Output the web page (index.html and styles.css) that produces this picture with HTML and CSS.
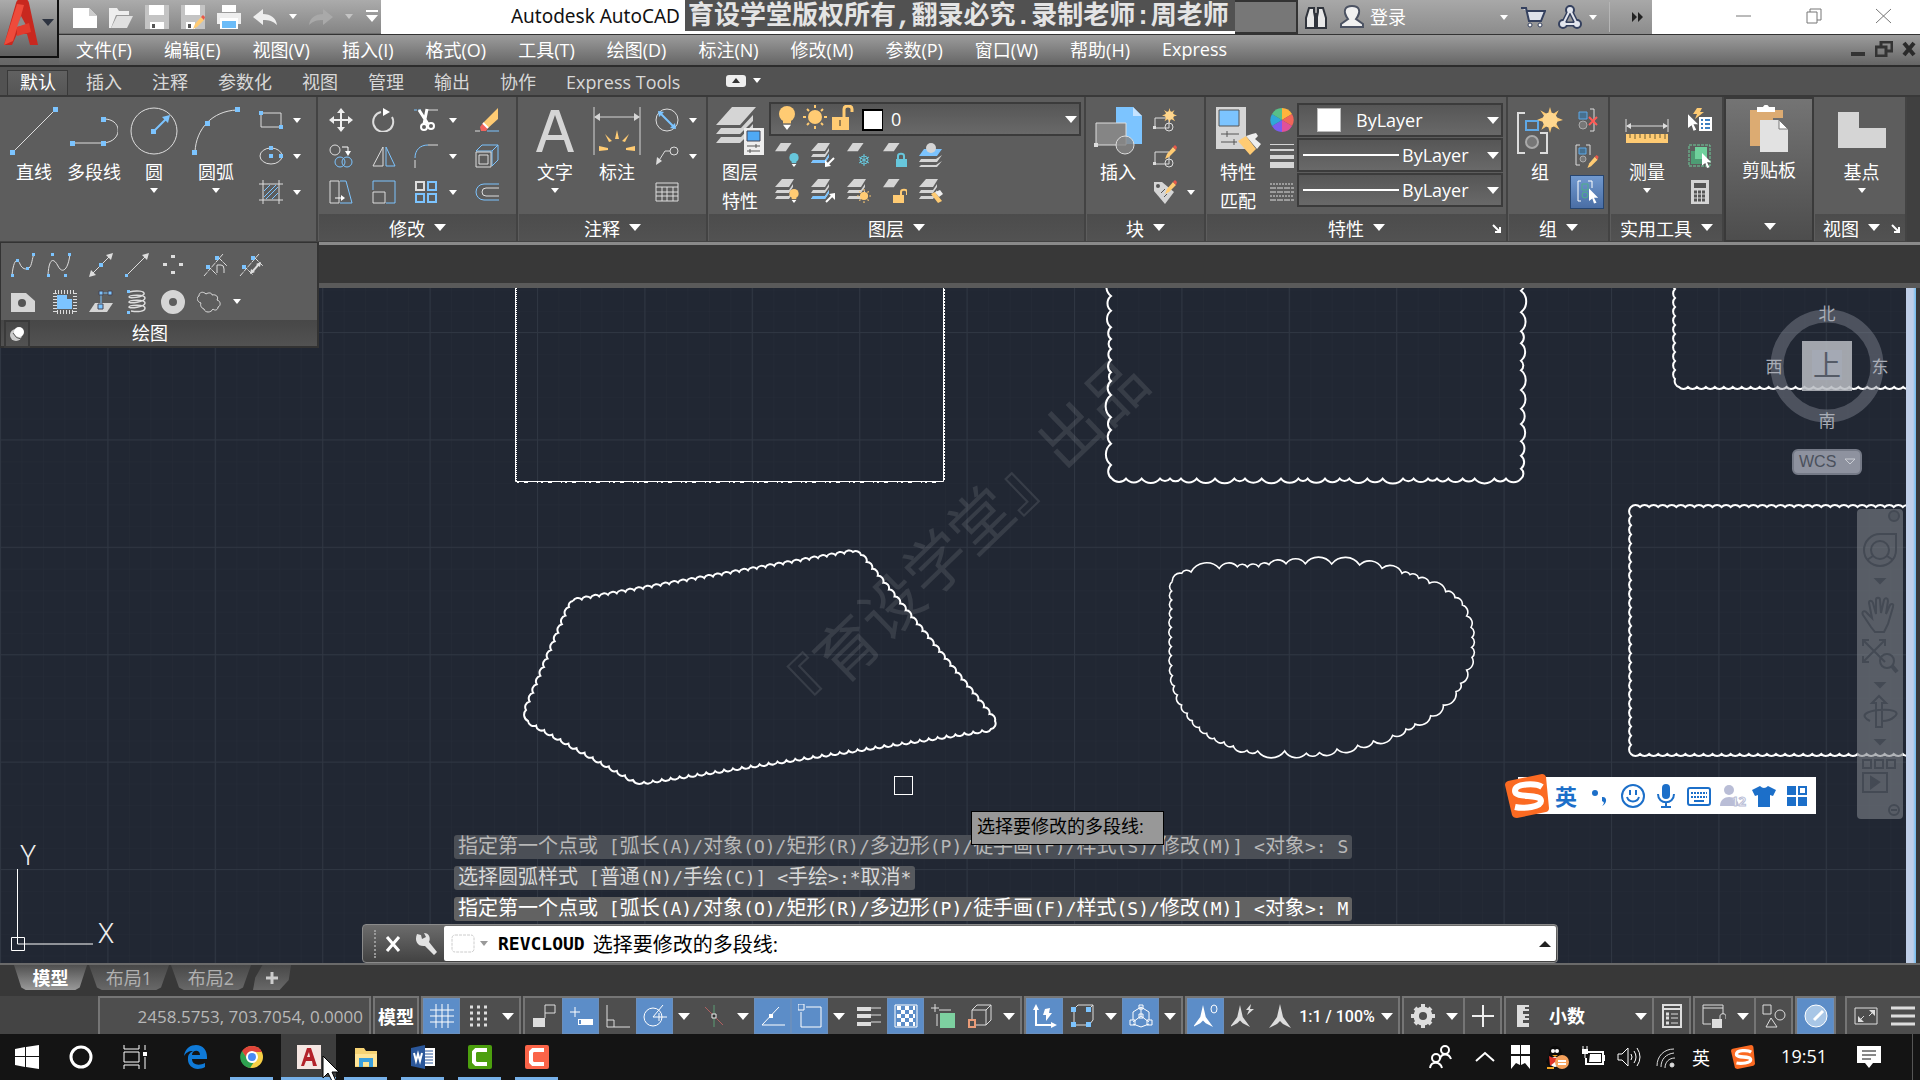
FILE: index.html
```html
<!DOCTYPE html>
<html lang="zh-CN">
<head>
    <meta charset="UTF-8">
    <title>Autodesk AutoCAD</title>
    <link rel="stylesheet" href="styles.css">
</head>
<body>

<!-- shapes used by more than one icon -->
<svg class="defs" width="0" height="0">
    <symbol id="sheet" viewBox="0 0 24 24"><path d="M7 1h13l-7 10H0z" fill="#d5d5d5"/></symbol>
    <symbol id="stack" viewBox="0 0 24 24">
        <path d="M7 0h12l-5 8H0z" fill="#d5d5d5"/>
        <path d="M2 11h12l4-6v3l-4 6H0z" fill="#d5d5d5"/>
        <path d="M2 17h12l4-6v3l-4 6H0z" fill="#d5d5d5"/>
    </symbol>
    <symbol id="bulb" viewBox="0 0 12 18"><circle cx="6" cy="6" r="6"/><path d="M3 11h6v2H3z"/><path d="M3 14h6l-3 4z" fill="#fff"/></symbol>
    <symbol id="sun" viewBox="0 0 24 24">
        <circle cx="12" cy="12" r="7" fill="#ffcb73"/>
        <path d="M12 0v3M12 21v3M0 12h3M21 12h3M4 4l2 2M18 18l2 2M4 20l2-2M18 6l2-2" stroke="#ffcb73" stroke-width="2"/>
    </symbol>
    <symbol id="burst" viewBox="0 0 24 24">
        <path d="M12 0l2 7 6-4-3 6 7 3-7 2 4 7-7-4-2 7-2-7-6 4 3-7-7-2 7-3-4-6 7 4z" fill="#ffcb73"/>
        <circle cx="12" cy="12" r="7" fill="#ffd78f"/>
    </symbol>
    <symbol id="pencil" viewBox="0 0 12 14"><path d="M0 14l2-5 6-7 3 3-7 7z" fill="#ffcb73"/><path d="M8 2l2-2 2 2-1 3z" fill="#e8594a"/></symbol>
    <symbol id="pointer" viewBox="0 0 12 18"><path d="M0 0v15l4-3 2 6 3-1-3-6h5z" fill="#fff"/></symbol>
    <symbol id="compass" viewBox="0 0 24 24"><path d="M12 0l3 13 8 11-8-4-3-3-3 3-8 4L9 13z"/></symbol>
    <symbol id="sogou" viewBox="0 0 44 44">
        <path d="M3 7l34-7q3 0 4 3l3 31q0 3-3 4L12 44q-4 0-5-3L0 11q0-3 3-4z" fill="#fb6a22"/>
        <path d="M37 13c-6-4-27-4-27 4 0 8 26 2 26 10 0 6-17 8-26 6" fill="none" stroke="#fff" stroke-width="6"/>
    </symbol>
</svg>

<header class="top">
    <button class="app-button" aria-label="应用程序菜单">
        <svg width="38" height="48" viewBox="0 0 38 48">
            <path d="M1 47L13 5q1-4 5-4h4q3 0 4 4l9 42h-8l-3-11H14l-5 11z" fill="#c8281f"/>
            <path d="M14 6L1 47l9-4 8-25 3-11z" fill="#ee4b3b"/>
            <path d="M18 18l-4 11 9-2z" fill="#8d8d8d"/>
            <path d="M14 29l12-4 2 9-14 4z" fill="#e33b2d"/>
        </svg>
        <span class="caret dark"></span>
    </button>

    <div class="top-rows">
        <div class="title-row">
            <div class="quick">
                <button aria-label="新建"><svg width="24" height="24"><path d="M0 3h16l8 8v12H0z" fill="#fff"/><path d="M16 3v8h8z" fill="#ccc"/></svg></button>
                <button aria-label="打开"><svg width="24" height="24"><path d="M0 3h8l2 3h10v4H7L2 23H0z" fill="#eee"/><path d="M8 11h16l-6 12H2z" fill="#e0e0e0"/></svg></button>
                <button aria-label="保存"><svg width="24" height="24"><path d="M0 0h24v24H0z" fill="#c4c4c4"/><path d="M4 0h15v10H4z" fill="#fff"/><path d="M5 17h14v7H5z" fill="#fff"/><path d="M7 19h3v4H7z" fill="#555"/></svg></button>
                <button aria-label="另存为"><svg width="24" height="24"><path d="M0 0h24v24H0z" fill="#c4c4c4"/><path d="M4 0h15v10H4z" fill="#fff"/><path d="M5 17h9v7H5z" fill="#fff"/><path d="M7 19h3v4H7z" fill="#555"/><use href="#pencil" x="12" y="10" width="12" height="14"/></svg></button>
                <button aria-label="打印"><svg width="24" height="24"><path d="M5 0h14v7H5z" fill="#fff"/><path d="M0 8h24v11H0z" fill="#eee"/><path d="M3 13h18v11H3z" fill="#fff"/><path d="M5 16h14v7H5z" fill="#6cbcf8"/></svg></button>
                <button aria-label="放弃"><svg width="24" height="24"><path d="M0 12L10 4v5c8 0 13 4 14 11-4-4-8-5-14-5v5z" fill="#eee"/></svg></button>
                <span class="caret small"></span>
                <button aria-label="重做"><svg width="24" height="24"><path d="M24 12L14 4v5C6 9 1 13 0 20c4-4 8-5 14-5v5z" fill="#a9a9a9"/></svg></button>
                <span class="caret small dim"></span>
                <button aria-label="自定义"><svg width="14" height="24"><path d="M1 5h12v2H1zM1 10h12l-6 7z" fill="#fff"/></svg></button>
            </div>
            <div class="title">Autodesk AutoCAD</div>
            <div class="notice">育设学堂版权所有,翻录必究.录制老师:周老师</div>
            <div class="search-rest"></div>
            <div class="info">
                <button aria-label="搜索"><svg width="24" height="24"><path d="M5 3h5v4l1 5v11H2V13zM14 3h5l3 10v10h-9V12l1-5z" fill="#e8e8e8" stroke="#30343c" stroke-width="2"/><path d="M10 8h4v5h-4z" fill="#30343c"/></svg></button>
                <button class="login"><svg width="24" height="24"><path d="M8 14c-6-8-3-13 4-13s10 5 4 13l7 5v3H1v-3z" fill="#f1f1f1" stroke="#4c5363" stroke-width="2"/></svg>登录</button>
                <span class="caret small"></span>
                <button aria-label="购物车"><svg width="26" height="24"><path d="M1 3h5l3 13h12l4-10H7" fill="#dde1ea" stroke="#34405e" stroke-width="2"/><circle cx="10" cy="20" r="2" fill="#fff" stroke="#34405e"/><circle cx="20" cy="20" r="2" fill="#fff" stroke="#34405e"/></svg></button>
                <button class="share"><svg width="24" height="24"><path d="M12 5L5 19h14z" fill="none" stroke="#34405e" stroke-width="5"/><g fill="#e3e6ee" stroke="#34405e" stroke-width="2"><circle cx="12" cy="5" r="4"/><circle cx="5" cy="19" r="4"/><circle cx="19" cy="19" r="4"/></g><path d="M12 5L5 19h14z" fill="none" stroke="#e3e6ee" stroke-width="2"/></svg><span class="caret small"></span></button>
                <span class="rule"></span>
                <button aria-label="更多"><svg width="12" height="12"><path d="M0 1l5 5-5 5zM6 1l5 5-5 5z" fill="#222"/></svg></button>
            </div>
            <div class="window-buttons">
                <button aria-label="最小化"><svg width="16" height="16"><path d="M0 8h15" stroke="#777"/></svg></button>
                <button aria-label="还原"><svg width="16" height="16"><path d="M1 4h10v11H1zM4 4V1h11v11h-4" fill="none" stroke="#777"/></svg></button>
                <button aria-label="关闭"><svg width="16" height="16"><path d="M0 1l15 14M15 1L0 15" stroke="#777"/></svg></button>
            </div>
        </div>
        <nav class="menu">
            <button>文件(F)</button>
            <button>编辑(E)</button>
            <button>视图(V)</button>
            <button>插入(I)</button>
            <button>格式(O)</button>
            <button>工具(T)</button>
            <button>绘图(D)</button>
            <button>标注(N)</button>
            <button>修改(M)</button>
            <button>参数(P)</button>
            <button>窗口(W)</button>
            <button>帮助(H)</button>
            <button>Express</button>
            <div class="doc-buttons">
                <button aria-label="最小化图形"><svg width="16" height="16"><path d="M1 11h14v4H1z" fill="#333"/></svg></button>
                <button aria-label="还原图形"><svg width="18" height="16"><path d="M1 6h10v9H1zM6 5V1h11v9h-5" fill="none" stroke="#333" stroke-width="3"/></svg></button>
                <button aria-label="关闭图形"><svg width="14" height="16"><path d="M2 2l10 12M12 2L2 14" stroke="#2a2a2a" stroke-width="4"/></svg></button>
            </div>
        </nav>
    </div>
</header>

<nav class="tabs">
    <button class="active">默认</button>
    <button>插入</button>
    <button>注释</button>
    <button>参数化</button>
    <button>视图</button>
    <button>管理</button>
    <button>输出</button>
    <button>协作</button>
    <button>Express Tools</button>
    <button class="fold" aria-label="最小化功能区"><svg width="20" height="12"><rect width="20" height="12" rx="3" fill="#eee"/><path d="M10 3l4 5H6z" fill="#333"/></svg><span class="caret small"></span></button>
</nav>

<section class="ribbon">
    <div class="panel draw">
        <div class="body">
            <button class="big"><svg width="48" height="48"><path d="M3 45L45 3" stroke="#ddd"/><path d="M0 43h5v5H0zM43 0h5v5h-5z" fill="#7cc4ff"/></svg>直线</button>
            <button class="big"><svg width="48" height="48"><path d="M3 36h30c20-1 20-24 1-24" fill="none" stroke="#ddd"/><path d="M0 34h5v5H0zM31 34h5v5h-5zM31 10h5v5h-5z" fill="#7cc4ff"/></svg>多段线</button>
            <button class="big"><svg width="48" height="48"><circle cx="24" cy="24" r="23" fill="none" stroke="#ddd"/><path d="M24 24L36 12" stroke="#7cc4ff" stroke-width="2"/><path d="M40 8l-2 8-6-6zM21 22h5v5h-5z" fill="#7cc4ff"/></svg>圆<span class="caret small"></span></button>
            <button class="big wide"><svg width="48" height="48"><path d="M3 45C4 22 20 4 45 3" fill="none" stroke="#ddd"/><path d="M0 43h5v5H0zM13 14h5v5h-5zM43 0h5v5h-5z" fill="#7cc4ff"/></svg>圆弧<span class="caret small"></span></button>
            <div class="tools two">
                <button aria-label="矩形"><svg width="24" height="24"><path d="M2 5h20v14H2z" fill="none" stroke="#ddd"/><path d="M0 3h4v4H0zM20 17h4v4h-4z" fill="#7cc4ff"/></svg></button>
                <span class="caret small"></span>
                <button aria-label="椭圆"><svg width="24" height="24"><ellipse cx="12" cy="12" rx="11" ry="8" fill="none" stroke="#ddd"/><path d="M10 2h4v4h-4zM10 10h4v4h-4zM20 10h4v4h-4z" fill="#7cc4ff"/></svg></button>
                <span class="caret small"></span>
                <button aria-label="图案填充"><svg width="24" height="24"><path d="M4 0v24M20 0v24M0 4h24M0 20h24" stroke="#ddd"/><path d="M5 11l6-6M5 17L17 5M7 19L19 7M13 19l6-6" stroke="#7cc4ff"/></svg></button>
                <span class="caret small"></span>
            </div>
        </div>
    </div>

    <div class="panel modify">
        <div class="body">
            <div class="tools five">
                <button aria-label="移动"><svg width="24" height="24"><path d="M12 0l4 5h-3v6h6V8l5 4-5 4v-3h-6v6h3l-4 5-4-5h3v-6H5v3l-5-4 5-4v3h6V5H8z" fill="#eee"/></svg></button>
                <button aria-label="旋转"><svg width="24" height="24"><path d="M9 4a10 10 0 1 0 11 5" fill="none" stroke="#ddd" stroke-width="2"/><path d="M11 0l7 4-7 4z" fill="#fff"/></svg></button>
                <button aria-label="修剪"><svg width="24" height="24"><path d="M0 2h8" stroke="#7cc4ff" stroke-dasharray="3 1"/><path d="M14 2h10" stroke="#ddd"/><path d="M5 2l9 14M13 1l-3 15" stroke="#fff" stroke-width="3"/><circle cx="10" cy="19" r="3" fill="none" stroke="#fff" stroke-width="2"/><circle cx="17" cy="18" r="3" fill="none" stroke="#fff" stroke-width="2"/></svg></button>
                <span class="caret small"></span>
                <button aria-label="删除"><svg width="24" height="24"><path d="M8 15L23 0v11L13 20z" fill="#ffcb73"/><path d="M8 15l5 5-2 3H6l-1-4z" fill="#f2625c"/><path d="M8 15l5 5" stroke="#fff" stroke-width="2"/><path d="M0 23h5" stroke="#ddd"/><path d="M12 23h12" stroke="#7cc4ff"/></svg></button>

                <button aria-label="复制"><svg width="24" height="24"><circle cx="6" cy="6" r="5" fill="none" stroke="#ddd"/><path d="M13 3h6v6" fill="none" stroke="#fff"/><path d="M16 7h6l-3 5z" fill="#fff"/><circle cx="11" cy="18" r="5" fill="none" stroke="#7cc4ff"/><circle cx="18" cy="18" r="5" fill="none" stroke="#7cc4ff"/></svg></button>
                <button aria-label="镜像"><svg width="24" height="24"><path d="M11 3v19H1z" fill="none" stroke="#ddd"/><path d="M14 3v19h9z" fill="none" stroke="#7cc4ff"/></svg></button>
                <button aria-label="圆角"><svg width="24" height="24"><path d="M1 24v-8M14 1h10" stroke="#ddd"/><path d="M1 14C1 6 6 1 14 1" fill="none" stroke="#7cc4ff"/></svg></button>
                <span class="caret small"></span>
                <button aria-label="分解"><svg width="24" height="24"><path d="M1 7l6-6h16v15l-6 6M1 7h16l6-6M17 7v15" fill="none" stroke="#7cc4ff"/><path d="M1 8h15v15H1zM4 11h9v9H4z" fill="none" stroke="#ddd"/></svg></button>

                <button aria-label="拉伸"><svg width="24" height="24"><path d="M1 1h9v22H1z" fill="none" stroke="#ddd"/><path d="M11 1h6l6 22H11" fill="none" stroke="#7cc4ff"/><path d="M6 18h7" stroke="#fff"/><path d="M12 15l4 3-4 3z" fill="#fff"/></svg></button>
                <button aria-label="缩放"><svg width="24" height="24"><path d="M1 10V1h22v22H14" fill="none" stroke="#7cc4ff"/><path d="M1 12h12v11H1z" fill="none" stroke="#ddd"/></svg></button>
                <button aria-label="阵列"><svg width="24" height="24"><path d="M2 2h8v8H2z" fill="none" stroke="#ddd" stroke-width="2"/><path d="M14 2h8v8h-8zM2 14h8v8H2zM14 14h8v8h-8z" fill="none" stroke="#7cc4ff" stroke-width="2"/></svg></button>
                <span class="caret small"></span>
                <button aria-label="偏移"><svg width="24" height="24"><path d="M24 4H9a8 8 0 0 0 0 16h15" fill="none" stroke="#7cc4ff"/><path d="M24 8H11a4 4 0 0 0 0 8h13" fill="none" stroke="#ddd"/></svg></button>
            </div>
        </div>
        <button class="name">修改<span class="caret"></span></button>
    </div>

    <div class="panel annotate">
        <div class="body">
            <button class="big"><svg width="48" height="48"><path d="M5 45L20 3h8l15 42h-6l-4-12H15l-4 12zM17 28h14L24 8z" fill="#d5d5d5"/></svg>文字<span class="caret small"></span></button>
            <button class="big wide"><svg width="48" height="48"><path d="M1 0v48M47 0v48M2 10h44" stroke="#d5d5d5"/><path d="M1 10l6-4v8zM47 10l-6-4v8z" fill="#d5d5d5"/><path d="M24 23l2 9h-4zM12 27l7 7-3 1zM36 27l-7 7 3 1zM6 39l9 2v2l-9 1zM42 39l-9 2v2l9 1z" fill="#ffcb73"/></svg>标注</button>
            <div class="tools two">
                <button aria-label="直径"><svg width="24" height="24"><circle cx="12" cy="12" r="11" fill="none" stroke="#ddd"/><path d="M5 5l14 14" stroke="#7cc4ff" stroke-width="2"/><path d="M3 3l6 1-5 5zM21 21l-6-1 5-5z" fill="#7cc4ff"/></svg></button>
                <span class="caret small"></span>
                <button aria-label="引线"><svg width="24" height="24"><circle cx="19" cy="7" r="4" fill="none" stroke="#ddd"/><path d="M15 7h-5L3 18" fill="none" stroke="#ddd"/><path d="M1 21l1-8 5 4z" fill="#ddd"/></svg></button>
                <span class="caret small"></span>
                <button aria-label="表格"><svg width="24" height="24"><path d="M1 3h22v18H1zM1 7h22M1 12h22M1 16h22M7 7v14M12 7v14M18 7v14" fill="none" stroke="#ddd"/></svg></button>
            </div>
        </div>
        <button class="name">注释<span class="caret"></span></button>
    </div>

    <div class="panel layers">
        <div class="body">
            <button class="big"><svg width="48" height="48"><path d="M16 0h24L24 18H0zM0 27l5-6h20l12-13v6L24 27zM0 36l5-6h20l12-13v6L24 36z" fill="#d5d5d5"/><path d="M28 21h20v27H28z" fill="#eee"/><path d="M31 24h13v10H31z" fill="#4fa9f5" stroke="#445"/><path d="M31 39h13M31 44h13M40 37v4M34 42v4" stroke="#555"/></svg>图层<br>特性</button>
            <div class="layer-side">
                <div class="combo">
                    <svg width="104" height="28">
                        <use href="#bulb" x="0" y="0" width="16" height="26" fill="#ffcb73"/>
                        <use href="#sun" x="24" y="0" width="24" height="24"/>
                        <path d="M53 12h17v13H53z" fill="#ffcb73"/><path d="M65 12V4c0-4 8-4 8 0v3" fill="none" stroke="#ffcb73" stroke-width="3"/><path d="M61 15v6" stroke="#333"/>
                        <path d="M84 5h20v20H84z" fill="#fff" stroke="#000" stroke-width="2"/>
                    </svg>
                    <select aria-label="图层"><option>0</option></select>
                    <span class="caret"></span>
                </div>
                <div class="tools layer-grid">
                    <button aria-label="关"><svg width="24" height="24"><use href="#sheet" width="20" height="20" y="-1"/><use href="#bulb" x="14" y="10" width="10" height="14" fill="#67c7dc"/></svg></button>
                    <button aria-label="置为当前"><svg width="24" height="24"><use href="#stack" width="24" height="24"/><path d="M2 17h12l4-6v3l-4 6H0z" fill="#7cc4ff"/><path d="M23 15l-6 6" stroke="#fff" stroke-width="2"/><path d="M14 24v-7l6 6z" fill="#fff"/></svg></button>
                    <button aria-label="冻结"><svg width="24" height="24"><use href="#sheet" width="20" height="20" y="-1"/><path d="M17 11v12M12 14l10 6M12 20l10-6" stroke="#67c7dc"/><circle cx="17" cy="17" r="4" fill="none" stroke="#67c7dc"/></svg></button>
                    <button aria-label="锁定"><svg width="24" height="24"><use href="#sheet" width="20" height="20" y="-1"/><path d="M13 16h11v8H13z" fill="#67c7dc"/><path d="M15 16v-3c0-3 6-3 6 0v3" fill="none" stroke="#67c7dc" stroke-width="2"/></svg></button>
                    <button aria-label="匹配"><svg width="24" height="24"><path d="M5 6h18l-5 7H0z" fill="#7cc4ff"/><path d="M2 16h15l6-4-5 7H0zM2 22h15l6-4-5 6H0z" fill="#d5d5d5"/><circle cx="12" cy="5" r="5" fill="#d5d5d5"/></svg></button>
                    <button aria-label="全部打开"><svg width="24" height="24"><use href="#stack" width="24" height="24"/><use href="#bulb" x="14" y="10" width="10" height="14" fill="#ffcb73"/></svg></button>
                    <button aria-label="上一个"><svg width="24" height="24"><use href="#stack" width="24" height="24"/><path d="M2 17h12l4-6v3l-4 6H0z" fill="#7cc4ff"/><path d="M15 23l6-6" stroke="#fff" stroke-width="2"/><path d="M24 14v7l-6-6z" fill="#fff"/></svg></button>
                    <button aria-label="解冻"><svg width="24" height="24"><use href="#stack" width="24" height="24"/><use href="#sun" x="10" y="10" width="14" height="14"/></svg></button>
                    <button aria-label="解锁"><svg width="24" height="24"><use href="#sheet" width="20" height="20" y="-1"/><path d="M10 16h11v8H10z" fill="#ffcb73"/><path d="M18 16v-3c0-3 6-3 6 0v3" fill="none" stroke="#ffcb73" stroke-width="2"/></svg></button>
                    <button aria-label="更改"><svg width="24" height="24"><use href="#stack" width="24" height="24"/><path d="M12 15l4-2 7 9-4 2z" fill="#ffcb73"/><path d="M16 13l5-2 3 4-4 3z" fill="#eee"/></svg></button>
                </div>
            </div>
        </div>
        <button class="name">图层<span class="caret"></span></button>
    </div>

    <div class="panel block">
        <div class="body">
            <button class="big"><svg width="48" height="48"><path d="M22 0h17l9 9v28H22z" fill="#7cc4ff"/><path d="M39 0v9h9z" fill="#c5e3ff"/><path d="M2 16h30v22H2z" fill="#858585" stroke="#ddd"/><circle cx="31" cy="38" r="9" fill="#858585" fill-opacity=".8" stroke="#ddd"/><path d="M0 36h4v4H0z" fill="#ddd"/></svg>插入</button>
            <div class="tools two">
                <button aria-label="创建"><svg width="24" height="24"><path d="M2 10h14v10H2z" fill="none" stroke="#ddd"/><circle cx="16" cy="19" r="4" fill="none" stroke="#ddd"/><use href="#burst" x="9" y="0" width="15" height="15"/><path d="M0 18h3v3H0z" fill="#ddd"/></svg></button>
                <span></span>
                <button aria-label="编辑"><svg width="24" height="24"><path d="M2 8h14v12H2z" fill="none" stroke="#ddd"/><circle cx="16" cy="19" r="4" fill="none" stroke="#ddd"/><use href="#pencil" x="12" y="1" width="12" height="14"/><path d="M0 18h3v3H0z" fill="#ddd"/></svg></button>
                <span></span>
                <button aria-label="编辑属性"><svg width="24" height="24"><path d="M1 2h8l12 10-9 12L1 11z" fill="#d5d5d5"/><circle cx="5" cy="6" r="2" fill="#555"/><use href="#pencil" x="12" y="0" width="12" height="14"/><path d="M8 13l4-4M11 17l3-3" stroke="#555"/></svg></button>
                <span class="caret small"></span>
            </div>
        </div>
        <button class="name">块<span class="caret"></span></button>
    </div>

    <div class="panel props">
        <div class="body">
            <button class="big"><svg width="48" height="48"><path d="M2 0h30v42H2z" fill="#d5d5d5"/><path d="M5 3h20v16H5z" fill="#7cc4ff" stroke="#555"/><path d="M7 27h18M7 35h16M13 24v6M20 32v6" stroke="#555"/><path d="M24 34l8-5 10 13-6 6z" fill="#ffcb73"/><path d="M32 29l6-2 4-1 2 3-3 3 6 5-4 5z" fill="#eee"/></svg>特性<br>匹配</button>
            <div class="tools prop-icons">
                <button aria-label="颜色"><svg width="24" height="24"><path d="M12 12V0a12 12 0 0 1 10 6z" fill="#ffb43c"/><path d="M12 12l10-6a12 12 0 0 1 0 12z" fill="#f2665a"/><path d="M12 12l10 6a12 12 0 0 1-10 6z" fill="#e0509a"/><path d="M12 12v12a12 12 0 0 1-10-6z" fill="#7a5cf0"/><path d="M12 12L2 18A12 12 0 0 1 2 6z" fill="#2fa8d8"/><path d="M12 12L2 6a12 12 0 0 1 10-6z" fill="#58c088"/></svg></button>
                <button aria-label="线宽"><svg width="24" height="24"><path d="M0 0h24v1H0zM0 5h24v2H0zM0 11h24v4H0zM0 18h24v6H0z" fill="#d5d5d5"/></svg></button>
                <button aria-label="线型"><svg width="24" height="24"><path d="M0 4h24M0 16h24" stroke="#ddd" stroke-dasharray="2 1"/><path d="M0 8h24M0 12h24M0 20h24" stroke="#ddd" stroke-dasharray="6 1"/></svg></button>
            </div>
            <div class="prop-combos">
                <div class="combo color"><span class="swatch"></span><select aria-label="对象颜色"><option>ByLayer</option></select><span class="caret"></span></div>
                <div class="combo"><span class="line"></span><select aria-label="线宽"><option>ByLayer</option></select><span class="caret"></span></div>
                <div class="combo"><span class="line"></span><select aria-label="线型"><option>ByLayer</option></select><span class="caret"></span></div>
            </div>
        </div>
        <button class="name">特性<span class="caret"></span><svg class="launch" width="10" height="10"><path d="M1 1l7 7M8 3v5H3" fill="none" stroke="#fff" stroke-width="2"/></svg></button>
    </div>

    <div class="panel group">
        <div class="body">
            <button class="big"><svg width="48" height="48"><path d="M9 6H2v40h7M24 26h7v20h-7" fill="none" stroke="#ddd" stroke-width="2"/><path d="M10 14h12v9H10z" fill="none" stroke="#5fa8e6" stroke-width="2"/><circle cx="16" cy="35" r="6" fill="#777" stroke="#aaa" stroke-width="2"/><use href="#burst" x="21" y="0" width="26" height="26"/></svg>组</button>
            <div class="tools one">
                <button aria-label="解除编组"><svg width="24" height="24"><path d="M4 4h8v7H4z" fill="#47708f" stroke="#5fa8e6"/><circle cx="8" cy="17" r="4" fill="#777" stroke="#aaa"/><path d="M15 1h4v22h-4" fill="none" stroke="#ddd"/><path d="M14 9l8 8M22 9l-8 8" stroke="#ff5a55" stroke-width="2"/></svg></button>
                <button aria-label="组编辑"><svg width="24" height="24"><path d="M5 1H1v20h4M11 1h4v10" fill="none" stroke="#ddd"/><path d="M4 4h7v6H4z" fill="#47708f" stroke="#5fa8e6"/><circle cx="8" cy="15" r="3" fill="#777" stroke="#aaa"/><use href="#pencil" x="12" y="11" width="12" height="13"/></svg></button>
                <button class="pressed" aria-label="组选择"><svg width="24" height="24"><path d="M6 1H3v20h3M13 1h4v7" fill="none" stroke="#fff"/><path d="M7 4h6v6H7z" fill="none" stroke="#4faf88"/><circle cx="10" cy="15" r="3" fill="none" stroke="#4faf88"/><use href="#pointer" x="14" y="8" width="10" height="16"/></svg></button>
            </div>
        </div>
        <button class="name">组<span class="caret"></span></button>
    </div>

    <div class="panel utils">
        <div class="body">
            <button class="big"><svg width="48" height="48"><path d="M3 12v13M45 12v13M4 19h40" stroke="#ddd"/><path d="M3 19l5-3v6zM45 19l-5-3v6z" fill="#ddd"/><path d="M3 27h42v9H3z" fill="#ffcb73"/><path d="M7 27v4M12 27v5M17 27v4M22 27v5M27 27v4M32 27v5M37 27v4M42 27v5" stroke="#6b5a30"/></svg>测量<span class="caret small"></span></button>
            <div class="tools one">
                <button aria-label="快速选择"><svg width="24" height="24"><path d="M11 9h13v14H11z" fill="#fff"/><path d="M13 12h2M13 16h2M13 20h2M17 12h5M17 16h5M17 20h5" stroke="#3c7fc0" stroke-width="2"/><path d="M9 0h5l-2 4h4L7 11l2-5H5z" fill="#ffcb73"/><use href="#pointer" x="0" y="6" width="11" height="17"/></svg></button>
                <button aria-label="全部选择"><svg width="24" height="24"><path d="M1 1h21v21H1z" fill="none" stroke="#6fd09c" stroke-dasharray="3 1"/><path d="M3 7h13v13H3z" fill="#4d9c74"/><path d="M7 3h12v12H7z" fill="#6fd09c"/><use href="#pointer" x="14" y="9" width="10" height="15"/></svg></button>
                <button aria-label="计算器"><svg width="24" height="24"><path d="M3 0h18v24H3z" fill="#d5d5d5"/><path d="M6 3h12v5H6z" fill="#555"/><path d="M6 12h12M6 16h12M6 20h12" stroke="#555" stroke-width="3" stroke-dasharray="3 1"/></svg></button>
            </div>
        </div>
        <button class="name">实用工具<span class="caret"></span></button>
    </div>

    <div class="panel clip">
        <div class="body">
            <button class="big"><svg width="48" height="48"><path d="M5 5h33v8H28v28H5z" fill="#dcab72"/><path d="M12 2h6q3-5 6 0h6v5H12z" fill="#fff"/><path d="M15 15h19l9 9v23H15z" fill="#e2e2e2"/><path d="M34 15v9h9z" fill="#fff" stroke="#777"/></svg>剪贴板</button>
        </div>
        <button class="name" aria-label="剪贴板"><span class="caret"></span></button>
    </div>

    <div class="panel view">
        <div class="body">
            <button class="big"><svg width="48" height="48"><path d="M0 5h21v16h27v20H0z" fill="#d5d5d5"/></svg>基点<span class="caret small"></span></button>
        </div>
        <button class="name">视图<span class="caret"></span><svg class="launch" width="10" height="10"><path d="M1 1l7 7M8 3v5H3" fill="none" stroke="#fff" stroke-width="2"/></svg></button>
    </div>
</section>

<!-- slid-out part of the draw panel, floats over the drawing -->
<section class="flyout">
    <div class="fly-row">
        <button aria-label="样条曲线拟合"><svg width="24" height="24"><path d="M1 22C3 4 7 6 9 11s6 6 9 4 3-10 5-14" fill="none" stroke="#ddd"/><path d="M0 21h3v3H0zM5 6h3v3H5zM15 14h3v3h-3zM21 0h3v3h-3z" fill="#7cc4ff"/></svg></button>
        <button aria-label="样条曲线控制点"><svg width="24" height="24"><path d="M1 22C2 4 7 5 11 13s10 5 12-12" fill="none" stroke="#ddd"/><path d="M0 21h3v3H0zM4 0h3v3H4zM17 21h3v3h-3zM21 0h3v3h-3z" fill="#7cc4ff"/></svg></button>
        <button class="next" aria-label="构造线"><svg width="24" height="24"><path d="M2 22L22 2" stroke="#ddd"/><path d="M24 0l-2 7-5-5zM0 24l2-7 5 5z" fill="#ddd"/><path d="M10 10h4v4h-4z" fill="#7cc4ff"/></svg></button>
        <button aria-label="射线"><svg width="24" height="24"><path d="M2 22L22 2" stroke="#ddd"/><path d="M24 0l-2 7-5-5z" fill="#ddd"/><path d="M0 21h3v3H0z" fill="#7cc4ff"/></svg></button>
        <button aria-label="多点"><svg width="24" height="24"><path d="M10 2h4v3h-4zM2 10h4v3H2zM18 10h4v3h-4zM10 18h4v3h-4z" fill="#ddd"/></svg></button>
        <button class="next" aria-label="定数等分"><svg width="24" height="24"><path d="M1 23L20 1M16 5l8 8M5 13l9 9" stroke="#ddd" stroke-dasharray="5 1"/><path d="M14 20v-8h4q3 0 3 4v4" fill="none" stroke="#ddd"/><path d="M12 3h4v4h-4zM3 12h4v4H3z" fill="#7cc4ff"/></svg></button>
        <button aria-label="定距等分"><svg width="24" height="24"><path d="M1 23L20 1M16 5l8 8M5 13l9 9" stroke="#ddd" stroke-dasharray="5 1"/><path d="M13 19l7-8" stroke="#ddd" stroke-width="2"/><path d="M22 9l-1 5-4-3zM11 21l1-5 4 3z" fill="#ddd"/><path d="M12 3h4v4h-4zM3 12h4v4H3z" fill="#7cc4ff"/></svg></button>
    </div>
    <div class="fly-row second">
        <button aria-label="面域"><svg width="24" height="24"><path d="M0 3h15l9 8v11H0z" fill="#d5d5d5"/><circle cx="11" cy="13" r="4" fill="#555"/></svg></button>
        <button class="next" aria-label="边界"><svg width="24" height="24"><path d="M2 2h20v20H2z" fill="none" stroke="#ddd" stroke-width="4" stroke-dasharray="1 2"/><path d="M4 5h10v4h5v10H4z" fill="#7cc4ff"/></svg></button>
        <button aria-label="区域覆盖"><svg width="24" height="24"><path d="M6 13h18l-6 9H0z" fill="#d5d5d5"/><path d="M12 3h9M12 3v11" stroke="#7cc4ff"/><path d="M10 1h4v4h-4zM19 1h4v4h-4zM9 14h5v5H9z" fill="#7cc4ff" stroke="#445"/></svg></button>
        <button aria-label="螺旋"><svg width="24" height="24"><path d="M4 2c8-2 16-1 15 2S4 9 4 7s16-3 16 1-16 6-16 4 16-3 16 1-16 6-16 4 16-3 16 1-8 4-14 3" fill="none" stroke="#ddd" stroke-width="1.5"/><path d="M2 0h3v3H2zM2 21h3v3H2z" fill="#7cc4ff"/></svg></button>
        <button aria-label="圆环"><svg width="24" height="24"><circle cx="12" cy="12" r="8" fill="none" stroke="#d5d5d5" stroke-width="8"/></svg></button>
        <button aria-label="修订云线"><svg width="24" height="24"><path d="M4 13C0 12-1 7 2 6c0-4 4-5 7-2 3-2 6-1 6 1 4-1 7 2 5 5 4 1 4 6 1 7 0 3-3 4-5 2-2 4-8 4-9 0-3-1-4-4-3-6z" fill="none" stroke="#ddd"/></svg></button>
        <span class="caret small"></span>
    </div>
    <div class="fly-name">
        <button class="pin" aria-label="固定"><svg width="20" height="20"><circle cx="9" cy="11" r="6" fill="#ccc"/><circle cx="12" cy="8" r="5" fill="#fff"/><path d="M6 9q3 6 8 6" stroke="#555" fill="none"/></svg></button>
        绘图
    </div>
</section>

<div class="file-strip"></div>

<main class="canvas">
    <svg class="drawing" viewBox="0 288 1906 675" preserveAspectRatio="xMinYMin slice">
        <defs>
            <pattern id="minor" width="21.48" height="21.48" patternUnits="userSpaceOnUse" y="332.5">
                <path d="M0 0H22M0 0V22" stroke="#262c38"/>
            </pattern>
            <pattern id="major" width="107.4" height="107.4" patternUnits="userSpaceOnUse" y="332">
                <path d="M0 .5H108M.5 0V108" stroke="#2f3642"/>
            </pattern>
        </defs>
        <rect y="288" width="1920" height="700" fill="url(#minor)"/>
        <rect y="288" width="1920" height="700" fill="url(#major)"/>
        <text class="stamp" x="959" y="564" transform="rotate(-44 959 542)">『育设学堂』出品</text>
        <g id="clouds"></g>
        <rect x="894.5" y="776.5" width="18" height="18" class="pen"/>
        <path class="pen" d="M17.5 869v75H93M11.5 937.5h13v13h-13z"/>
        <text class="axis" x="28" y="865">Y</text>
        <text class="axis" x="106" y="943">X</text>
    </svg>

    <div class="cube">
        <svg width="128" height="132">
            <circle cx="64" cy="64" r="50" fill="none" stroke="#8b909a" stroke-opacity=".42" stroke-width="13"/>
            <rect x="39" y="39" width="50" height="50" fill="#b9bcc2" fill-opacity=".85"/>
            <rect x="49" y="48" width="30" height="30" fill="#a4a9b4"/>
            <text x="64" y="18">北</text>
            <text x="64" y="125">南</text>
            <text x="11" y="71">西</text>
            <text x="117" y="71">东</text>
            <text class="up" x="64" y="74">上</text>
        </svg>
        <button class="wcs">WCS<svg width="12" height="8"><path d="M1 1h10L6 6z" fill="none" stroke="#c9ccd3"/></svg></button>
    </div>

    <div class="navbar">
        <svg width="46" height="310" fill="none" stroke="#444a54" stroke-width="2">
            <circle cx="37" cy="7" r="5" fill="#50565f"/>
            <path d="M23 25h16v16a16 16 0 1 1-16-16z"/><circle cx="23" cy="41" r="9"/><path d="M10 51l6-4M36 51l-6-4"/>
            <path d="M19 70h8l-4 4z" fill="#444a54"/>
            <path d="M14 118l-8-12c-2-4 2-5 4-2l5 5-3-15c0-3 3-3 4 0l3 11V91c0-3 4-3 4 0l1 13 3-13c1-3 4-2 4 1l-2 13 4-9c2-2 4-1 3 2l-5 17-4 8H18z"/>
            <path d="M6 131l22 22M28 131L6 153M6 137v-6h6M22 131h6v6M6 147v6h6"/><circle cx="30" cy="152" r="7"/><path d="M35 157l5 6" stroke-width="4"/>
            <path d="M19 174h8l-4 4z" fill="#444a54"/>
            <path d="M19 218v-24h-4l7-7 7 7h-4v24zM13 212c-24-12 40-16 24-4-3 3-8 4-12 4"/>
            <path d="M19 231h8l-4 4z" fill="#444a54"/>
            <path d="M6 251h8v8H6zM18 251h8v8h-8zM30 251h8v8h-8zM6 264h24v19H6z"/><path d="M14 268v11l8-6z" fill="#444a54"/>
            <circle cx="37" cy="301" r="5"/><path d="M34 301h6"/>
        </svg>
    </div>

    <div class="ime">
        <svg width="44" height="44"><use href="#sogou" width="44" height="44"/></svg>
        <button class="ime-lang">英</button>
        <button aria-label="标点"><svg width="24" height="24"><circle cx="7" cy="9" r="3" fill="#1c6fc9"/><path d="M14 13c5-1 6 6 0 9 3-3 2-4 0-5z" fill="#1c6fc9"/></svg></button>
        <button aria-label="表情"><svg width="24" height="24" fill="none" stroke="#1c6fc9" stroke-width="2"><circle cx="12" cy="12" r="11"/><path d="M9 6v5M15 6v5M6 13c2 6 10 6 12 0"/></svg></button>
        <button aria-label="语音"><svg width="24" height="24"><rect x="8" y="0" width="8" height="15" rx="4" fill="#1c6fc9"/><path d="M4 10c0 11 16 11 16 0M12 18v5M7 23h10" fill="none" stroke="#1c6fc9" stroke-width="2"/></svg></button>
        <button aria-label="键盘"><svg width="24" height="24"><rect x="1" y="4" width="22" height="17" rx="2" fill="none" stroke="#1c6fc9" stroke-width="2"/><path d="M4 9h16M4 13h16" stroke="#1c6fc9" stroke-width="2" stroke-dasharray="2 1"/><path d="M7 17h10" stroke="#1c6fc9" stroke-width="2"/></svg></button>
        <button class="user" aria-label="用户"><svg width="28" height="24"><circle cx="9" cy="6" r="5" fill="#b9bdd6"/><path d="M0 22c0-12 18-12 19 0z" fill="#b9bdd6"/><text x="11" y="22">12</text></svg></button>
        <button aria-label="皮肤"><svg width="24" height="24"><path d="M8 2q4 4 8 0l8 4-3 6-3-1v12H6V11l-3 1-3-6z" fill="#1c6fc9"/></svg></button>
        <button aria-label="工具箱"><svg width="24" height="24"><path d="M2 2h9v9H2zM2 13h9v9H2zM13 13h9v9h-9z" fill="#1c6fc9"/><rect x="14" y="3" width="7" height="7" fill="none" stroke="#1c6fc9" stroke-width="2"/></svg></button>
    </div>

    <div class="history">
        <p class="old">指定第一个点或<code> [</code>弧长<code>(A)/</code>对象<code>(O)/</code>矩形<code>(R)/</code>多边形<code>(P)/</code>徒手画<code>(F)/</code>样式<code>(S)/</code>修改<code>(M)] &lt;</code>对象<code>&gt;: S</code></p>
        <p class="mid">选择圆弧样式<code> [</code>普通<code>(N)/</code>手绘<code>(C)] &lt;</code>手绘<code>&gt;:*</code>取消<code>*</code></p>
        <p>指定第一个点或<code> [</code>弧长<code>(A)/</code>对象<code>(O)/</code>矩形<code>(R)/</code>多边形<code>(P)/</code>徒手画<code>(F)/</code>样式<code>(S)/</code>修改<code>(M)] &lt;</code>对象<code>&gt;: M</code></p>
    </div>
    <div class="hint">选择要修改的多段线:</div>

    <form class="command">
        <span class="grip"></span>
        <button type="button" aria-label="关闭"><svg width="16" height="16"><path d="M2 1l12 14M14 1L2 15" stroke="#fff" stroke-width="3"/></svg></button>
        <button type="button" aria-label="自定义"><svg width="24" height="24"><path d="M3 2l4 1 1 4 4-2-2-4c5 0 7 5 5 9l8 10-3 3-9-9C4 15 0 9 3 2z" fill="#e2e2e2"/></svg></button>
        <div class="entry">
            <svg width="34" height="24"><rect x="1" y="3" width="22" height="17" rx="3" fill="none" stroke="#ccc" stroke-dasharray="3 1"/><path d="M29 9h8l-4 5z" fill="#999"/></svg>
            <label for="cmd">REVCLOUD</label>
            <input id="cmd" type="text" value="选择要修改的多段线:">
            <span class="caret up-caret"></span>
        </div>
    </form>
    <div class="side-scroll"></div>
</main>

<nav class="layouts">
    <button class="current">模型</button>
    <button>布局1</button>
    <button>布局2</button>
    <button class="plus" aria-label="新建布局"><svg width="12" height="12"><path d="M6 0v12M0 6h12" stroke="#ccc" stroke-width="3"/></svg></button>
</nav>

<footer class="status">
    <div class="set coords">2458.5753, 703.7054, 0.0000</div>
    <div class="set"><button class="model">模型</button></div>
    <div class="set">
        <button class="on" aria-label="栅格"><svg width="24" height="24"><path d="M6 0v24M12 0v24M18 0v24M0 6h24M0 12h24M0 18h24" stroke="#fff"/></svg></button>
        <button aria-label="捕捉"><svg width="24" height="24"><path d="M3 3h18M3 9h18M3 15h18M3 21h18" stroke="#ddd" stroke-width="3" stroke-dasharray="3 4"/></svg></button>
        <span class="caret"></span>
    </div>
    <div class="set">
        <button aria-label="推断约束"><svg width="24" height="24"><path d="M1 14h12v9H1z" fill="#ddd"/><path d="M13 14V1h10v8H13" fill="none" stroke="#ddd"/></svg></button>
        <button class="on" aria-label="动态输入"><svg width="24" height="24"><path d="M6 3v10M1 8h10" stroke="#fff"/><path d="M9 15h15v6H9z" fill="#fff"/><path d="M10 16h2v4h-2z" fill="#5c8dc8"/></svg></button>
        <button aria-label="正交"><svg width="24" height="24"><path d="M1 1v22h23M1 16h7v7" fill="none" stroke="#ddd"/></svg></button>
        <button class="on" aria-label="极轴"><svg width="24" height="24"><circle cx="10" cy="13" r="9" fill="none" stroke="#fff"/><path d="M10 13h14M10 13L20 1M16 9v8" stroke="#fff"/></svg></button>
        <span class="caret"></span>
        <button aria-label="等轴测"><svg width="24" height="24"><path d="M12 1v22" stroke="#5a9d74"/><path d="M3 3l18 18" stroke="#b06060"/><path d="M10 10h4v4h-4z" fill="#333" stroke="#eee"/></svg></button>
        <span class="caret"></span>
        <button class="on" aria-label="对象捕捉追踪"><svg width="24" height="24"><path d="M18 3L1 21h23" fill="none" stroke="#fff"/><path d="M8 10h4v4H8z" fill="#fff"/></svg></button>
        <button class="on" aria-label="对象捕捉"><svg width="24" height="24"><path d="M8 3h15v20H3V8M0 0h6v6H0z" fill="none" stroke="#fff"/></svg></button>
        <span class="caret"></span>
        <button aria-label="线宽"><svg width="24" height="24"><path d="M0 5h14M0 12h14M0 20h14" stroke="#ddd" stroke-width="4"/><path d="M14 4h10M14 11h10M14 18h10" stroke="#ddd"/></svg></button>
        <button class="on" aria-label="透明度"><svg width="24" height="24"><path d="M1 1h22v22H1z" fill="none" stroke="#fff"/><path d="M3 4h18M3 12h18M3 20h18" stroke="#fff" stroke-width="4" stroke-dasharray="4 4"/><path d="M7 8h15M7 16h15" stroke="#fff" stroke-width="4" stroke-dasharray="4 4"/></svg></button>
        <button aria-label="选择循环"><svg width="24" height="24"><path d="M9 9h15v15H9z" fill="#7dd0a0"/><path d="M4 0v8M0 4h8M8 6h12M6 10v12" fill="none" stroke="#ddd"/></svg></button>
        <button aria-label="三维对象捕捉"><svg width="24" height="24"><path d="M4 6l5-5h14v15l-5 5H8M4 6h14v15M4 6v9M18 6l5-5" fill="none" stroke="#ddd"/><path d="M1 16h6v7H1z" fill="none" stroke="#ea9c78" stroke-width="2"/></svg></button>
        <span class="caret"></span>
    </div>
    <div class="set">
        <button class="on" aria-label="动态 UCS"><svg width="24" height="24"><path d="M3 3v18h18" fill="none" stroke="#fff" stroke-width="2"/><path d="M0 6l3-6 3 6zM18 18l6 3-6 3zM12 5l5-1-1 5h3l-6 8v-6h-3z" fill="#fff"/></svg></button>
        <button aria-label="选择过滤"><svg width="24" height="24"><path d="M4 5l4-4h15v15l-4 5H4zM19 5l4-4" fill="none" stroke="#ddd"/><path d="M1 3h5v5H1zM16 3h5v5h-5zM1 18h5v5H1zM16 18h5v5h-5z" fill="#7cc4ff"/></svg></button>
        <span class="caret"></span>
        <button class="on" aria-label="小控件"><svg width="24" height="24" fill="none" stroke="#fff"><path d="M12 3L4 8v8M12 3l8 5v8M4 20l8 3 8-3M12 3v9M12 12l-8 6M12 12l8 6"/><path d="M10 1h4v4h-4zM10 10h4v4h-4zM1 16h5v5H1zM18 16h5v5h-5z"/></svg></button>
        <span class="caret"></span>
    </div>
    <div class="set">
        <button class="on" aria-label="注释可见性"><svg width="24" height="24"><use href="#compass" x="-2" width="22" height="24" fill="#fff"/><ellipse cx="20" cy="5" rx="3" ry="4" fill="none" stroke="#fff"/></svg></button>
        <button aria-label="自动缩放"><svg width="24" height="24"><use href="#compass" x="-2" width="22" height="24" fill="#ddd"/><path d="M20 0l-5 6h3l-2 5 7-6h-4z" fill="#ddd"/></svg></button>
        <button aria-label="注释比例"><svg width="24" height="24"><use href="#compass" width="24" height="24" fill="#ddd"/></svg></button>
        <select class="scale" aria-label="比例"><option>1:1 / 100%</option></select>
        <span class="caret"></span>
    </div>
    <div class="set">
        <button aria-label="切换工作空间"><svg width="24" height="24"><circle cx="12" cy="12" r="7" fill="none" stroke="#ddd" stroke-width="5"/><path d="M12 0v24M0 12h24M4 4l16 16M20 4L4 20" stroke="#ddd" stroke-width="4"/><circle cx="12" cy="12" r="4" fill="#4e4e4e"/></svg></button>
        <span class="caret"></span>
        <button class="split" aria-label="注释监视器"><svg width="24" height="24"><path d="M12 1v22M1 12h22" stroke="#eee" stroke-width="2"/></svg></button>
    </div>
    <div class="set">
        <label class="units" for="units" aria-label="单位"><svg width="12" height="24"><path d="M0 1h12v2H8v2h4v2H6v3h6v2H8v2h4v2H6v3h6v4H0z" fill="#ddd"/></svg></label>
        <select id="units"><option>小数</option></select>
        <span class="caret"></span>
        <button class="split" aria-label="快捷特性"><svg width="24" height="24"><path d="M3 1h18v22H3zM3 5h18" fill="none" stroke="#ddd" stroke-width="2"/><path d="M6 10h3M6 14h3M6 19h3" stroke="#ddd" stroke-width="3"/><path d="M11 10h7M11 14h7M11 19h7" stroke="#ddd"/></svg></button>
    </div>
    <div class="set">
        <button aria-label="锁定界面"><svg width="24" height="24"><path d="M9 20H1V1h20v9M1 4h20" fill="none" stroke="#ddd"/><path d="M10 15h10v9H10z" fill="#ddd"/><path d="M18 15v-3c0-3 6-3 6 0v3" fill="none" stroke="#ddd"/></svg></button>
        <span class="caret"></span>
        <button class="split" aria-label="隔离对象"><svg width="24" height="24" fill="none" stroke="#ddd"><path d="M1 1h8v9H1zM9 14l6 9H4z"/><circle cx="18" cy="11" r="5"/></svg></button>
    </div>
    <div class="set"><button class="on" aria-label="图形性能"><svg width="24" height="24"><circle cx="12" cy="12" r="11" fill="#a8c6e6" stroke="#fff"/><path d="M10 16l9-9" stroke="#fff" stroke-width="3"/></svg></button></div>
    <div class="set last">
        <button aria-label="全屏显示"><svg width="24" height="24"><path d="M1 4h22v16H1z" fill="none" stroke="#ddd"/><path d="M15 6h6v6zM4 18v-6l6 6z" fill="#ddd"/><path d="M20 7l-5 5M5 17l5-5" stroke="#ddd"/></svg></button>
        <button aria-label="自定义"><svg width="24" height="24"><path d="M0 4h24M0 12h24M0 20h24" stroke="#ddd" stroke-width="3"/></svg></button>
    </div>
</footer>

<footer class="taskbar">
    <button class="sys" aria-label="开始"><svg width="24" height="24"><path d="M0 4l10-2v9H0zM11 2l13-2v11H11zM0 12h10v10L0 20zM11 12h13v12l-13-2z" fill="#fff"/></svg></button>
    <button class="sys" aria-label="Cortana"><svg width="24" height="24"><circle cx="12" cy="12" r="10" fill="none" stroke="#fff" stroke-width="3"/></svg></button>
    <button class="sys" aria-label="任务视图"><svg width="24" height="24"><path d="M1 0v4h15V0M1 24v-4h15v4M1 7h15v10H1zM22 0v5M22 12v12" fill="none" stroke="#fff"/><path d="M20 7h4v4h-4z" fill="#fff"/></svg></button>
    <button class="app" aria-label="Edge"><svg width="24" height="24"><path d="M1 11C2 3 8 0 13 0c7 0 11 5 11 12v2H9c0 6 7 7 13 4v4c-9 5-18 0-17-9 0-4 3-6 5-7C5 6 3 8 1 11zm8-1h8c0-6-8-5-8 0z" fill="#0f7ad8"/></svg></button>
    <button class="app open" aria-label="Chrome"><svg width="24" height="24"><circle cx="12" cy="12" r="11" fill="#f7cf45"/><path d="M12 1a11 11 0 0 1 10 6H12L7 14 2 6q4-5 10-5z" fill="#e0443a"/><path d="M2 6l6 9 6 2-4 6A11 11 0 0 1 2 6z" fill="#2ea150"/><circle cx="12" cy="12" r="5" fill="#4a8af4" stroke="#fff" stroke-width="2"/></svg></button>
    <button class="app open here" aria-label="AutoCAD"><svg width="24" height="24"><path d="M0 0h24v24H0z" fill="#f5e6e2"/><path d="M4 21L10 3h4l6 18h-4l-1-5H9l-2 5z" fill="#b3222a"/><path d="M10 12l2-5 1 5z" fill="#f5e6e2"/></svg></button>
    <button class="app open" aria-label="资源管理器"><svg width="24" height="24"><path d="M1 3h9l2 3h11v16H1z" fill="#f6d374"/><path d="M1 9h22v12H1z" fill="#ffe597"/><path d="M5 22v-9h14v9h-4v-5H9v5z" fill="#3ba0dd"/></svg></button>
    <button class="app open" aria-label="Word"><svg width="24" height="24"><path d="M13 3h11v18H13z" fill="#fff"/><path d="M14 6h8M14 9h8M14 12h8M14 15h8M14 18h8" stroke="#2b579a"/><path d="M0 3l14-3v24L0 21z" fill="#2b579a"/><path d="M3 8l2 8 2-7 2 7 2-8" fill="none" stroke="#fff" stroke-width="2"/></svg></button>
    <button class="app open" aria-label="Camtasia"><svg width="24" height="24"><rect width="24" height="24" rx="2" fill="#4c9f0e"/><path d="M19 5H8L6 7v10l2 2h11" fill="none" stroke="#fff" stroke-width="4"/></svg></button>
    <button class="app open" aria-label="录像机"><svg width="24" height="24"><rect width="24" height="24" rx="2" fill="#fb6448"/><path d="M19 5H8L6 7v10l2 2h11" fill="none" stroke="#fff" stroke-width="4"/></svg></button>

    <div class="tray">
        <button class="people" aria-label="人脉"><svg width="24" height="24" fill="none" stroke="#fff" stroke-width="2"><circle cx="17" cy="5" r="4"/><circle cx="8" cy="13" r="4"/><path d="M12 14c1-6 9-6 11 0M2 23c1-7 10-7 12 0"/></svg></button>
        <button aria-label="显示隐藏的图标"><svg width="20" height="12"><path d="M1 10l9-8 9 8" fill="none" stroke="#fff" stroke-width="2"/></svg></button>
        <button aria-label="管家"><svg width="20" height="24"><path d="M0 0h9v9H0zM10 0h9v9h-9zM0 11h9v9l-4-2-5 6zM10 11h9v13l-5-6-4 2z" fill="#fff"/></svg></button>
        <button aria-label="QQ"><svg width="24" height="24"><path d="M10 1c6 0 7 6 7 10l2 6-4 5H5l-4-5 3-6c0-5 1-10 6-10z" fill="#0a0a0a"/><ellipse cx="10" cy="17" rx="5" ry="5" fill="#fff"/><path d="M4 11q6 4 12 0v4l-6 2-5 4z" fill="#e1352b"/><circle cx="8" cy="6" r="2" fill="#fff"/><circle cx="12" cy="6" r="2" fill="#fff"/><path d="M7 10h6l-3 2zM2 22h7v2H2z" fill="#f5a623"/><circle cx="17" cy="17" r="7" fill="#f4a15c"/><path d="M13 16h8M13 19h8" stroke="#fff" stroke-width="2"/></svg></button>
        <button aria-label="电池"><svg width="24" height="24"><path d="M7 7h15v12H5v-6" fill="none" stroke="#fff" stroke-width="2"/><path d="M9 9h11v8H8z" fill="#fff"/><path d="M22 10h2v6h-2zM1 4h6v5H1z" fill="#fff"/><path d="M2 1v3M6 1v3M4 9v4" stroke="#fff"/></svg></button>
        <button aria-label="音量"><svg width="24" height="24" fill="none" stroke="#fff"><path d="M1 9h4l6-6v18l-6-6H1zM14 9q2 3 0 6M17 6q4 6 0 12M20 3q6 9 0 18"/></svg></button>
        <button aria-label="网络"><svg width="24" height="24" fill="none" stroke="#ddd"><path d="M4 21C4 11 11 4 21 4M8 22C8 14 13 9 21 8M12 23C12 17 16 13 22 13"/><circle cx="19" cy="20" r="2" fill="#ddd"/></svg></button>
        <button class="lang">英</button>
        <button aria-label="搜狗输入法"><svg width="24" height="24"><use href="#sogou" width="24" height="24"/></svg></button>
        <time>19:51</time>
        <button aria-label="通知"><svg width="24" height="24"><path d="M0 1h24v17h-8l-4 5-4-5H0z" fill="#fff"/><path d="M5 6h14M5 10h14M5 14h9" stroke="#111"/></svg></button>
        <span class="desktop-edge"></span>
    </div>
    <svg class="mouse" width="18" height="26"><path d="M1 1v22l5-5 4 8h4l-4-9h7z" fill="#fff" stroke="#000"/></svg>
</footer>

<script src="script.js"></script>
</body>
</html>
```
FILE: styles.css
```css
* {
    box-sizing: border-box;
}

body {
    margin: 0;
    height: 100vh;
    display: flex;
    flex-direction: column;
    position: relative;
    overflow: hidden;
    background: #383838;
    color: #fff;
    font-family: "Open Sans", "Noto Sans CJK SC", sans-serif;
    font-size: 18px;
}

button, select, input {
    background: none;
    border: 0;
    padding: 0;
    margin: 0;
    color: inherit;
    font: inherit;
}

select {
    appearance: none;
}

svg {
    display: block;
    flex: none;
}

.defs {
    position: absolute;
}

.caret {
    flex: none;
    width: 0;
    height: 0;
    border: 6px solid transparent;
    border-top: 7px solid #fff;
    border-bottom: 0;
}

.caret.small {
    border-width: 5px 4px 0;
}

.caret.dark {
    border-top-color: #2d3340;
}

.caret.dim {
    border-top-color: #c4c4c4;
}

/* title bar and menu */
.top {
    display: flex;
    flex: none;
    height: 67px;
    background: linear-gradient(#8f8f8f, #666);
    border-bottom: 2px solid #2c2c2c;
}

.app-button {
    display: flex;
    align-items: center;
    gap: 1px;
    width: 59px;
    height: 58px;
    padding: 0 0 12px 3px;
    background: linear-gradient(#ababab, #5f5f5f);
    border: solid #111;
    border-width: 0 2px 2px 0;
}

.top-rows {
    flex: 1;
}

.title-row {
    display: flex;
    height: 34px;
    background: #fff;
    color: #111;
}

.quick {
    display: flex;
    align-items: center;
    gap: 12px;
    width: 322px;
    padding: 0 0 0 14px;
    background: linear-gradient(#ababab, #858585);
    border-bottom: 1px solid #6d6d6d;
}

.title {
    width: 304px;
    padding-right: 5px;
    text-align: right;
    line-height: 32px;
    font-size: 19px;
    font-family: "Noto Sans", sans-serif;
}

.notice {
    width: 550px;
    height: 31px;
    padding-left: 3px;
    background: #515151;
    color: #e4e4e4;
    font: bold 26px/34px "Liberation Mono", "Noto Sans CJK SC", monospace;
    white-space: nowrap;
    overflow: hidden;
}

.search-rest {
    width: 63px;
    background: #777;
    border: solid #333;
    border-width: 2px 2px 2px 0;
}

.info {
    display: flex;
    align-items: center;
    gap: 12px;
    width: 354px;
    padding: 0 6px;
    background: linear-gradient(#a8a8a8, #8c8c8c);
    color: #fff;
}

.login {
    display: flex;
    gap: 6px;
    align-items: center;
    width: 148px;
    line-height: 24px;
}

.share {
    display: flex;
    align-items: center;
    gap: 7px;
}

.rule {
    width: 1px;
    height: 30px;
    margin-right: 10px;
    background: #b5b5b5;
}

.window-buttons {
    flex: 1;
    display: flex;
    align-items: center;
    justify-content: flex-end;
    gap: 54px;
    padding: 0 28px 2px 0;
}

.menu {
    display: flex;
    align-items: center;
    gap: 32px;
    height: 31px;
    padding: 0 0 3px 17px;
    background: linear-gradient(#9c9c9c, #656565);
    border-top: 1px solid #333;
}

.doc-buttons {
    display: flex;
    gap: 9px;
    margin-left: auto;
    padding-right: 4px;
}

.tabs {
    display: flex;
    flex: none;
    align-items: stretch;
    gap: 30px;
    height: 30px;
    padding: 3px 0 0 7px;
    background: #525252;
    color: #d8d8d8;
    border-bottom: 2px solid #393939;
    line-height: 22px;
}

.tabs button {
    padding-bottom: 2px;
}

.tabs .active {
    padding: 0 11px 2px 12px;
    margin-right: -12px;
    color: #fff;
    background: linear-gradient(#616161, #555);
    border: 1px solid #393939;
    border-bottom: 0;
}

.tabs .fold {
    display: flex;
    align-items: center;
    gap: 7px;
    margin-left: 16px;
    padding-bottom: 4px;
}

/* ribbon */
.ribbon {
    display: flex;
    flex: none;
    height: 148px;
    background: #404040;
    border-bottom: 3px solid #8a8a8a;
}

.panel {
    flex: none;
    display: flex;
    flex-direction: column;
    background: #5d5d5d;
    border-right: 2px solid #434343;
    border-bottom: 1px solid #434343;
}

.body {
    flex: 1;
    display: flex;
    padding: 5px 0 0 2px;
}

.name {
    display: flex;
    align-items: center;
    justify-content: center;
    gap: 9px;
    position: relative;
    height: 27px;
    margin-left: 1px;
    background: linear-gradient(#4c4c4c, #525252);
}

.launch {
    position: absolute;
    right: 4px;
    top: 10px;
}

.draw { width: 318px; }
.modify { width: 200px; }
.annotate { width: 190px; }
.layers { width: 378px; }
.block { width: 120px; }
.props { width: 302px; }
.group { width: 102px; }
.utils { width: 114px; }
.clip { width: 90px; }
.view { width: 93px; }

.big {
    display: flex;
    flex-direction: column;
    align-items: center;
    flex: none;
    width: 60px;
    height: 110px;
    padding-top: 5px;
    line-height: 29px;
    white-space: nowrap;
}

.big svg {
    margin-bottom: 3px;
}

.big .caret {
    margin-top: 1px;
}

.big.wide {
    width: 64px;
}

.tools {
    display: grid;
    grid-auto-rows: 36px;
    align-content: start;
    align-items: center;
    justify-items: center;
}

.tools.one { grid-template-columns: 36px; }
.tools.two { grid-template-columns: 36px 16px; }
.tools.five { grid-template-columns: 42px 43px 41px 14px 54px; }

.draw .body {
    padding-left: 4px;
}

.draw .tools {
    margin-left: 5px;
}

.annotate .body {
    padding-left: 7px;
}

.utils .body {
    padding-left: 7px;
}

.utils .tools {
    margin-left: 5px;
}

.layer-side {
    width: 312px;
    margin-left: -1px;
}

.layer-grid {
    grid-template-columns: repeat(5, 36px);
    padding-top: 1px;
}

.combo {
    display: flex;
    align-items: center;
    gap: 8px;
    position: relative;
    height: 34px;
    padding: 0 4px 0 8px;
    background: linear-gradient(#565656, #696969);
    border: 2px solid #3b3b3b;
}

.combo select {
    flex: 1;
    min-width: 0;
}

.combo .caret {
    position: absolute;
    right: 2px;
}

.block .tools, .group .tools {
    margin-left: -1px;
}

.prop-icons {
    grid-template-columns: 28px;
}

.prop-combos {
    display: grid;
    grid-auto-rows: 34px;
    gap: 1px;
    width: 206px;
    align-content: start;
    margin-left: 1px;
    padding-top: 1px;
}

.prop-combos .combo {
    padding-left: 4px;
    gap: 3px;
}

.prop-combos .color {
    padding-left: 18px;
    gap: 15px;
}

.swatch {
    width: 24px;
    height: 24px;
    background: #fff;
    border: 1px solid #bbb;
}

.line {
    width: 96px;
    height: 2px;
    background: #fff;
}

.pressed {
    padding: 4px;
    background: linear-gradient(#7199cf, #4a6ea5);
    border: 1px solid #27456f;
}

.clip {
    background: linear-gradient(#747474, #4d4d4d);
    border: 2px solid #3a3a3a;
}

.clip .body, .view .body {
    justify-content: center;
    padding-left: 0;
}

.clip .body {
    padding-top: 1px;
}

.clip .name {
    background: none;
}

.view .body {
    padding-left: 4px;
}

.view .name {
    justify-content: flex-start;
    padding-left: 8px;
}

/* draw panel slide-out */
.flyout {
    position: absolute;
    z-index: 2;
    left: 0;
    top: 242px;
    width: 319px;
    background: #5d5d5d;
    border: solid #333;
    border-width: 1px 2px 2px 1px;
}

.fly-row {
    display: flex;
    align-items: center;
    gap: 12px;
    height: 40px;
    padding: 3px 0 0 10px;
}

.fly-row.second {
    height: 37px;
    padding-top: 0;
}

.fly-row .next {
    margin-left: 6px;
}

.fly-name {
    position: relative;
    height: 26px;
    padding-right: 18px;
    text-align: center;
    line-height: 26px;
    background: linear-gradient(#474747, #525252);
}

.pin {
    position: absolute;
    left: 3px;
    top: 0;
    padding: 2px 1px;
    border: 2px solid #3a3a3a;
}

.file-strip {
    flex: none;
    height: 43px;
    background: #383838;
    border-bottom: 5px solid #5a5a5a;
}

/* drawing area */
.canvas {
    flex: 1;
    min-height: 0;
    position: relative;
    margin-right: 4px;
    background: #212733;
    overflow: hidden;
}

.drawing {
    position: absolute;
    width: calc(100% - 10px);
    height: 100%;
}

.pen {
    fill: none;
    stroke: #fff;
}

.stamp {
    fill: #fff;
    fill-opacity: .1;
    font-size: 62px;
    text-anchor: middle;
    font-family: "Noto Sans CJK SC", sans-serif;
}

.axis {
    fill: #eee;
    font: 300 27px Roboto, sans-serif;
    text-anchor: middle;
}

.side-scroll {
    position: absolute;
    top: 0;
    right: 0;
    bottom: 0;
    width: 10px;
    background: linear-gradient(90deg, #c0cfe8 70%, #6cbcf0);
}

.cube {
    position: absolute;
    top: 14px;
    right: 25px;
    display: flex;
    flex-direction: column;
    align-items: center;
    gap: 15px;
}

.cube text {
    fill: #a9adb6;
    font-size: 17px;
    text-anchor: middle;
}

.cube .up {
    fill: #555b67;
    font-size: 28px;
}

.wcs {
    display: flex;
    align-items: center;
    gap: 8px;
    width: 70px;
    height: 26px;
    padding-left: 5px;
    border: 2px solid #757a87;
    border-radius: 6px;
    background: #8e929f;
    color: #4a505c;
    font-size: 16px;
    font-family: "Liberation Sans", sans-serif;
}

.navbar {
    position: absolute;
    top: 221px;
    right: 13px;
    background: rgba(125, 130, 137, .6);
    border-radius: 4px;
}

.ime {
    position: absolute;
    top: 489px;
    right: 100px;
    display: flex;
    align-items: center;
    gap: 9px;
    width: 298px;
    height: 37px;
    background: #fff;
}

.ime > svg {
    margin-left: -13px;
    margin-right: -4px;
}

.ime-lang {
    width: 24px;
    margin-right: 1px;
    color: #1c6fc9;
    font-size: 22px;
    font-weight: bold;
    line-height: 36px;
}

.ime .user {
    margin-right: -5px;
}

.ime text {
    fill: #fff;
    stroke: #b9bdd6;
    font: bold 13px "Open Sans", sans-serif;
}

.history {
    position: absolute;
    left: 454px;
    bottom: 42px;
    display: flex;
    flex-direction: column;
    align-items: flex-start;
    gap: 7px;
    font-size: 20px;
}

.history p {
    margin: 0;
    padding: 0 4px;
    height: 24px;
    line-height: 22px;
    background: #626262;
    border-radius: 3px;
    white-space: pre;
}

.history code {
    font: 18px "DejaVu Sans Mono", monospace;
}

.history .mid {
    background: #56595e;
    color: #d8d8d8;
}

.history .old {
    background: #4b4f56;
    color: #b8b8b8;
}

.hint {
    position: absolute;
    left: 971px;
    top: 523px;
    width: 193px;
    height: 34px;
    padding-left: 5px;
    line-height: 29px;
    background: #989898;
    border: 1px solid #000;
    color: #000;
}

.command {
    position: absolute;
    left: 362px;
    right: 358px;
    bottom: 0;
    display: flex;
    align-items: center;
    gap: 13px;
    height: 39px;
    padding: 1px 1px 1px 11px;
    background: linear-gradient(#6c6c6c, #424242);
    border: 1px solid #8a8a8a;
    border-radius: 4px;
}

.grip {
    height: 28px;
    border-left: 2px dotted #999;
    margin-right: -4px;
}

.entry {
    flex: 1;
    display: flex;
    align-items: center;
    align-self: stretch;
    gap: 13px;
    margin-left: -7px;
    padding: 0 5px 0 7px;
    background: #fff;
    color: #000;
    border-radius: 2px;
    font-size: 20px;
}

.entry svg {
    overflow: visible;
}

.entry label {
    font: bold 18px "DejaVu Sans Mono", monospace;
}

.entry input {
    flex: 1;
    margin-left: -5px;
    outline: none;
}

.up-caret {
    border-top: 0;
    border-bottom: 6px solid #222;
}

/* layout tabs */
.layouts {
    display: flex;
    flex: none;
    gap: 2px;
    height: 33px;
    padding: 0 0 6px 14px;
    background: #383838;
    border-top: 2px solid #6a6a6a;
    color: #b0b0b0;
}

.layouts button {
    width: 80px;
    height: 25px;
    line-height: 22px;
    background: linear-gradient(#484848, #686868);
    clip-path: polygon(0 0, 100% 0, 90% 90%, 84% 100%, 16% 100%, 10% 90%);
}

.layouts .current {
    width: 73px;
    background: linear-gradient(#505050, #999);
    color: #fff;
    font-weight: bold;
}

.layouts .plus {
    display: grid;
    place-items: center;
    width: 38px;
    clip-path: polygon(25% 0, 100% 0, 94% 60%, 70% 100%, 0 100%, 6% 50%);
}

/* status bar */
.status {
    display: flex;
    flex: none;
    gap: 2px;
    height: 38px;
    padding-left: 98px;
    background: #444;
}

.set {
    display: flex;
    align-items: center;
    flex: none;
    background: #4e4e4e;
    border: 2px solid #757575;
    border-bottom: 0;
}

.set button {
    display: grid;
    place-items: center;
    width: 37px;
    height: 36px;
}

.set .on {
    background: #5c8dc8;
    border: 1px solid #6a8fbd;
}

.set .caret {
    margin: 0 5px;
}

.set .model {
    width: 42px;
    font-weight: bold;
}

.set .split {
    border-left: 2px solid #757575;
}

.coords {
    justify-content: flex-end;
    width: 273px;
    padding-right: 6px;
    color: #b8b8b8;
    font-size: 17px;
}

.scale {
    width: 78px;
    font-size: 16px;
    font-weight: 500;
    text-align: center;
    font-family: Roboto, sans-serif;
}

.units {
    padding: 0 20px 0 11px;
}

#units {
    width: 81px;
    font-weight: bold;
}

.set.last {
    flex: 1;
    margin-left: 7px;
    border-right: 0;
}

/* windows taskbar */
.taskbar {
    position: relative;
    display: flex;
    flex: none;
    height: 46px;
    background: #141414;
}

.taskbar button {
    display: grid;
    place-items: center;
}

.sys {
    width: 54px;
}

.app {
    width: 55px;
    margin-left: 2px;
}

.sys + .app {
    margin-left: 5px;
}

.open {
    background: linear-gradient(#76b0e8, #76b0e8) center bottom / 43px 3px no-repeat;
}

.here {
    background-color: #3e3e3e;
    background-size: 100% 3px;
}

.tray {
    display: flex;
    align-items: center;
    margin-left: auto;
}

.tray button {
    width: 36px;
}

.tray .people {
    margin-right: 9px;
}

.tray .lang {
    margin-right: 6px;
}

.tray time {
    margin: 0 24px 2px 20px;
}

.desktop-edge {
    width: 8px;
    height: 46px;
    margin-left: 25px;
    border-left: 1px solid #555;
}

.mouse {
    position: absolute;
    left: 322px;
    top: 21px;
}
```
FILE: script.js
```js
// Revision clouds: each list of nodes becomes a chain of arcs bulging to the left hand side.
var group = document.getElementById('clouds');

function addPath(d, width, dash) {
    var path = document.createElementNS('http://www.w3.org/2000/svg', 'path');
    path.setAttribute('d', d);
    path.setAttribute('class', 'pen');
    path.setAttribute('stroke-width', width);
    if (dash) {
        path.setAttribute('stroke-dasharray', dash);
    }
    group.appendChild(path);
}

function cloud(nodes, width, round) {
    var d = 'M' + nodes[0][0] + ' ' + nodes[0][1];
    for (var i = 1; i < nodes.length; i++) {
        var dx = nodes[i][0] - nodes[i - 1][0];
        var dy = nodes[i][1] - nodes[i - 1][1];
        var r = Math.sqrt(dx * dx + dy * dy) * round;
        d += 'A' + r + ' ' + r + ' 0 0 1 ' + nodes[i][0] + ' ' + nodes[i][1];
    }
    addPath(d, width);
}

// cut straight sides into equal steps
function split(corners, step) {
    var nodes = [corners[0]];
    for (var i = 1; i < corners.length; i++) {
        var a = corners[i - 1], b = corners[i];
        var n = Math.max(1, Math.round(Math.hypot(b[0] - a[0], b[1] - a[1]) / step));
        for (var k = 1; k <= n; k++) {
            nodes.push([a[0] + (b[0] - a[0]) * k / n, a[1] + (b[1] - a[1]) * k / n]);
        }
    }
    return nodes;
}

// nodes measured on a 3x sheet
function place(nodes) {
    return nodes.map(function (p) {
        return [1080 + p[0] / 3, 280 + p[1] / 3];
    });
}

// fine rectangle, its arcs are so small that they show as dots beside the line
addPath('M515.5 280V481.5H943.5V280', 1);
addPath('M516.5 280V481', 1, '1 1');
addPath('M944.5 280V481', 1, '2 1');
addPath('M517 482.5H943', 1, '2 5 4 9 1 3');

// large rectangle with uneven arcs
var bottom = [1323, 1278, 1243, 1184, 1148, 1105, 1071, 1044, 1001, 969, 908, 862, 808, 779, 735, 683, 655, 603, 545, 495, 463, 405, 350, 303, 270, 240, 185, 138, 96];
var right = [-10, 32, 97, 154, 190, 242, 271, 330, 386, 432, 484, 527, 566];
var left = [555, 491, 450, 412, 345, 303, 277, 240, 207, 177, 142, 92, 48, -10];
cloud(place(
    right.map(function (y) { return [1323, y]; })
        .concat(bottom.map(function (x) { return [x, 596]; }))
        .concat(left.map(function (y) { return [93, y]; }))
), 2, 0.64);

cloud(split([[1930, 387], [1679, 387], [1675, 379], [1675, 280]], 9), 2, 0.7);
cloud(split([[1930, 754], [1631, 754], [1631, 507], [1930, 507]], 9), 2, 0.7);

// polygon
cloud(split([[573, 601], [853, 552], [861, 555], [995, 721], [991, 729], [644, 782], [633, 780], [528, 721], [526, 710], [569, 607], [573, 601]], 9), 2, 0.62);

// freehand loop
cloud(place([
    [277, 905], [305, 880], [333, 876], [418, 865], [472, 860], [502, 861], [536, 860], [567, 854], [618, 851], [676, 851],
    [755, 852], [839, 855], [906, 865], [966, 880], [990, 884], [1016, 895], [1048, 910], [1097, 935], [1125, 953],
    [1147, 975], [1160, 1008], [1173, 1042], [1176, 1072], [1175, 1102], [1176, 1132], [1160, 1170], [1142, 1210],
    [1128, 1235], [1090, 1275], [1052, 1307], [1005, 1332], [978, 1347], [938, 1366], [880, 1383], [833, 1396],
    [771, 1407], [718, 1418], [679, 1420], [614, 1413], [533, 1413], [501, 1411], [460, 1398], [432, 1386],
    [403, 1375], [380, 1360], [358, 1342], [337, 1322], [322, 1300], [305, 1275], [292, 1245], [283, 1218],
    [277, 1187], [275, 1157], [274, 1127], [274, 1100], [274, 1072], [274, 1042], [274, 1013], [275, 987],
    [275, 960], [275, 933], [277, 905]
]), 1.6, 0.62);
```
